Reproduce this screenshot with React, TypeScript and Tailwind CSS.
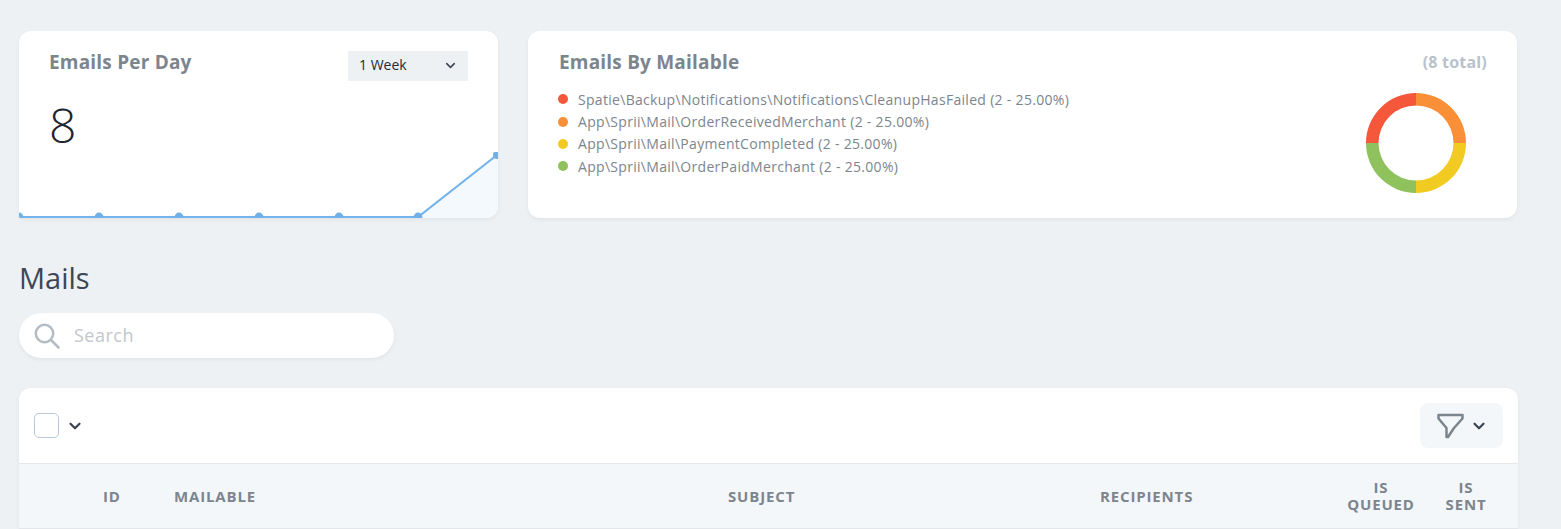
import { ChevronDown } from 'lucide-react'

const legend = [
  { label: 'Spatie\\Backup\\Notifications\\Notifications\\CleanupHasFailed (2 - 25.00%)', dot: 'bg-[#f5573b]' },
  { label: 'App\\Sprii\\Mail\\OrderReceivedMerchant (2 - 25.00%)', dot: 'bg-[#f99037]' },
  { label: 'App\\Sprii\\Mail\\PaymentCompleted (2 - 25.00%)', dot: 'bg-[#f2cb22]' },
  { label: 'App\\Sprii\\Mail\\OrderPaidMerchant (2 - 25.00%)', dot: 'bg-[#8fc15d]' },
]

function Sparkline() {
  const xs = [0, 80, 160, 240, 320, 399]
  return (
    <svg width="479" height="66" viewBox="0 0 479 66" className="block">
      <path d="M399 65 L478 3 H479 V66 H399 Z" fill="#f4f9fd" />
      <path d="M0 65 H399 L478 3" fill="none" stroke="#74b4ec" strokeWidth="2.2" />
      {xs.map((x) => (
        <circle key={x} cx={x} cy="65" r="4.4" fill="#70b0e8" />
      ))}
      <circle cx="478" cy="3" r="4" fill="#70b0e8" />
    </svg>
  )
}

function Donut() {
  return (
    <svg width="102" height="102" viewBox="0 0 102 102" className="block">
      <path d="M51 1 A50 50 0 0 1 101 51 H88.5 A37.5 37.5 0 0 0 51 13.5 Z" fill="#f99037" />
      <path d="M101 51 A50 50 0 0 1 51 101 V88.5 A37.5 37.5 0 0 0 88.5 51 Z" fill="#f2cb22" />
      <path d="M51 101 A50 50 0 0 1 1 51 H13.5 A37.5 37.5 0 0 0 51 88.5 Z" fill="#8fc15d" />
      <path d="M1 51 A50 50 0 0 1 51 1 V13.5 A37.5 37.5 0 0 0 13.5 51 Z" fill="#f5573b" />
    </svg>
  )
}

export default function App() {
  return (
    <div className="h-[529px] overflow-hidden bg-[#edf1f4] pl-[19px] pr-[43px] pt-[31px] font-['Open_Sans','Noto_Sans',sans-serif] text-[#3c4655]">
      {/* Metric cards */}
      <div className="flex gap-[30px] pr-[1px]">
        <div className="relative flex h-[187px] w-[479px] flex-col overflow-hidden rounded-xl rounded-bl-[2px] bg-white shadow-[0_2px_4px_rgba(0,0,0,0.05)]">
          <div className="flex items-start justify-between pl-[30px] pr-[30px] pt-[20px]">
            <h3 className="text-[19px] font-bold leading-[22px] tracking-[0.2px] text-[#7c858e]">Emails Per Day</h3>
            <div className="flex h-[30px] w-[120px] items-center justify-between bg-[#edf1f4] pl-[11px] pr-[10px] text-[14px] text-[#1f2937]">
              <span className="-mt-[3px]">1 Week</span>
              <ChevronDown size={15} strokeWidth={2.5} className="-mt-[2px] text-[#3c4655]" />
            </div>
          </div>
          <p className="-mb-[3px] pl-[30px] pt-[14px] text-[48px] font-light leading-[60px] text-[#1f2530]">8</p>
          <div className="mt-auto">
            <Sparkline />
          </div>
        </div>

        <div className="flex h-[187px] flex-1 justify-between rounded-xl bg-white pl-[31px] pr-[30px] pt-[19px] shadow-[0_2px_4px_rgba(0,0,0,0.05)]">
          <div>
            <h3 className="text-[19px] font-bold leading-[24px] tracking-[0.2px] text-[#7c858e]">Emails By Mailable</h3>
            <ul className="mt-[14px]">
              {legend.map((item) => (
                <li key={item.label} className="-ml-[1px] flex h-[22.4px] items-center text-[14px] tracking-[0.3px] text-[#7c858e]">
                  <span className={`mr-[10px] h-[10px] w-[10px] rounded-full ${item.dot}`} />
                  {item.label}
                </li>
              ))}
            </ul>
          </div>
          <div className="flex flex-col items-end">
            <span className="text-[16px] font-bold leading-[24px] tracking-[0.2px] text-[#b8c2cc]">(8 total)</span>
            <div className="mr-[20px] mt-[18px]">
              <Donut />
            </div>
          </div>
        </div>
      </div>

      <h1 className="mt-[43px] -translate-y-[1px] text-[29px] font-normal leading-[36px] text-[#3c4655]">Mails</h1>

      {/* Search */}
      <div className="mt-[16px] flex h-[45px] w-[375px] items-center rounded-full bg-white pl-[15px] shadow-[0_2px_4px_rgba(0,0,0,0.05)]">
        <svg width="26" height="26" viewBox="0 0 26 26" fill="none" stroke="#b4bcc4" strokeWidth="2.6" strokeLinecap="round">
          <circle cx="10.5" cy="10.5" r="8.7" />
          <path d="M17 17 L24.5 24.5" />
        </svg>
        <span className="ml-[14px] text-[18px] tracking-[0.5px] text-[#c2c7cc]">Search</span>
      </div>

      {/* Table */}
      <div className="mt-[30px] w-[1499px] overflow-hidden rounded-t-xl bg-white shadow-[0_2px_4px_rgba(0,0,0,0.05)]">
        <div className="flex h-[76px] items-center justify-between border-b border-[#e3e7eb] pl-[15px] pr-[15px]">
          <div className="flex items-center">
            <span className="h-[25px] w-[25px] rounded-[5px] border border-[#b8c8d8] bg-white" />
            <ChevronDown size={18} strokeWidth={3} className="ml-[7px] text-[#3c4655]" />
          </div>
          <div className="flex h-[45px] w-[83px] items-center rounded-lg bg-[#f4f7fa] pl-[17px]">
            <svg width="27" height="26" viewBox="0 0 27 26" fill="none" stroke="#7c858e" strokeWidth="2.5" strokeLinejoin="round">
              <path d="M1.5 2 H25.5 V5.5 L17 15 L11 24 H9.5 V15 L1.5 5.5 Z" />
            </svg>
            <ChevronDown size={18} strokeWidth={3} className="ml-[6px] text-[#3c4655]" />
          </div>
        </div>
        <div className="flex h-[65px] items-center border-b border-[#e3e7eb] bg-[#f4f7fa] text-[15px] font-bold uppercase leading-[17px] tracking-[0.85px] text-[#7c858e]">
          <span className="ml-[84px] w-[71px]">ID</span>
          <span className="w-[554px]">Mailable</span>
          <span className="w-[372px]">Subject</span>
          <span className="w-[232px]">Recipients</span>
          <span className="w-[98px] text-center">Is<br />Queued</span>
          <span className="w-[72px] text-center">Is<br />Sent</span>
        </div>
      </div>
    </div>
  )
}
